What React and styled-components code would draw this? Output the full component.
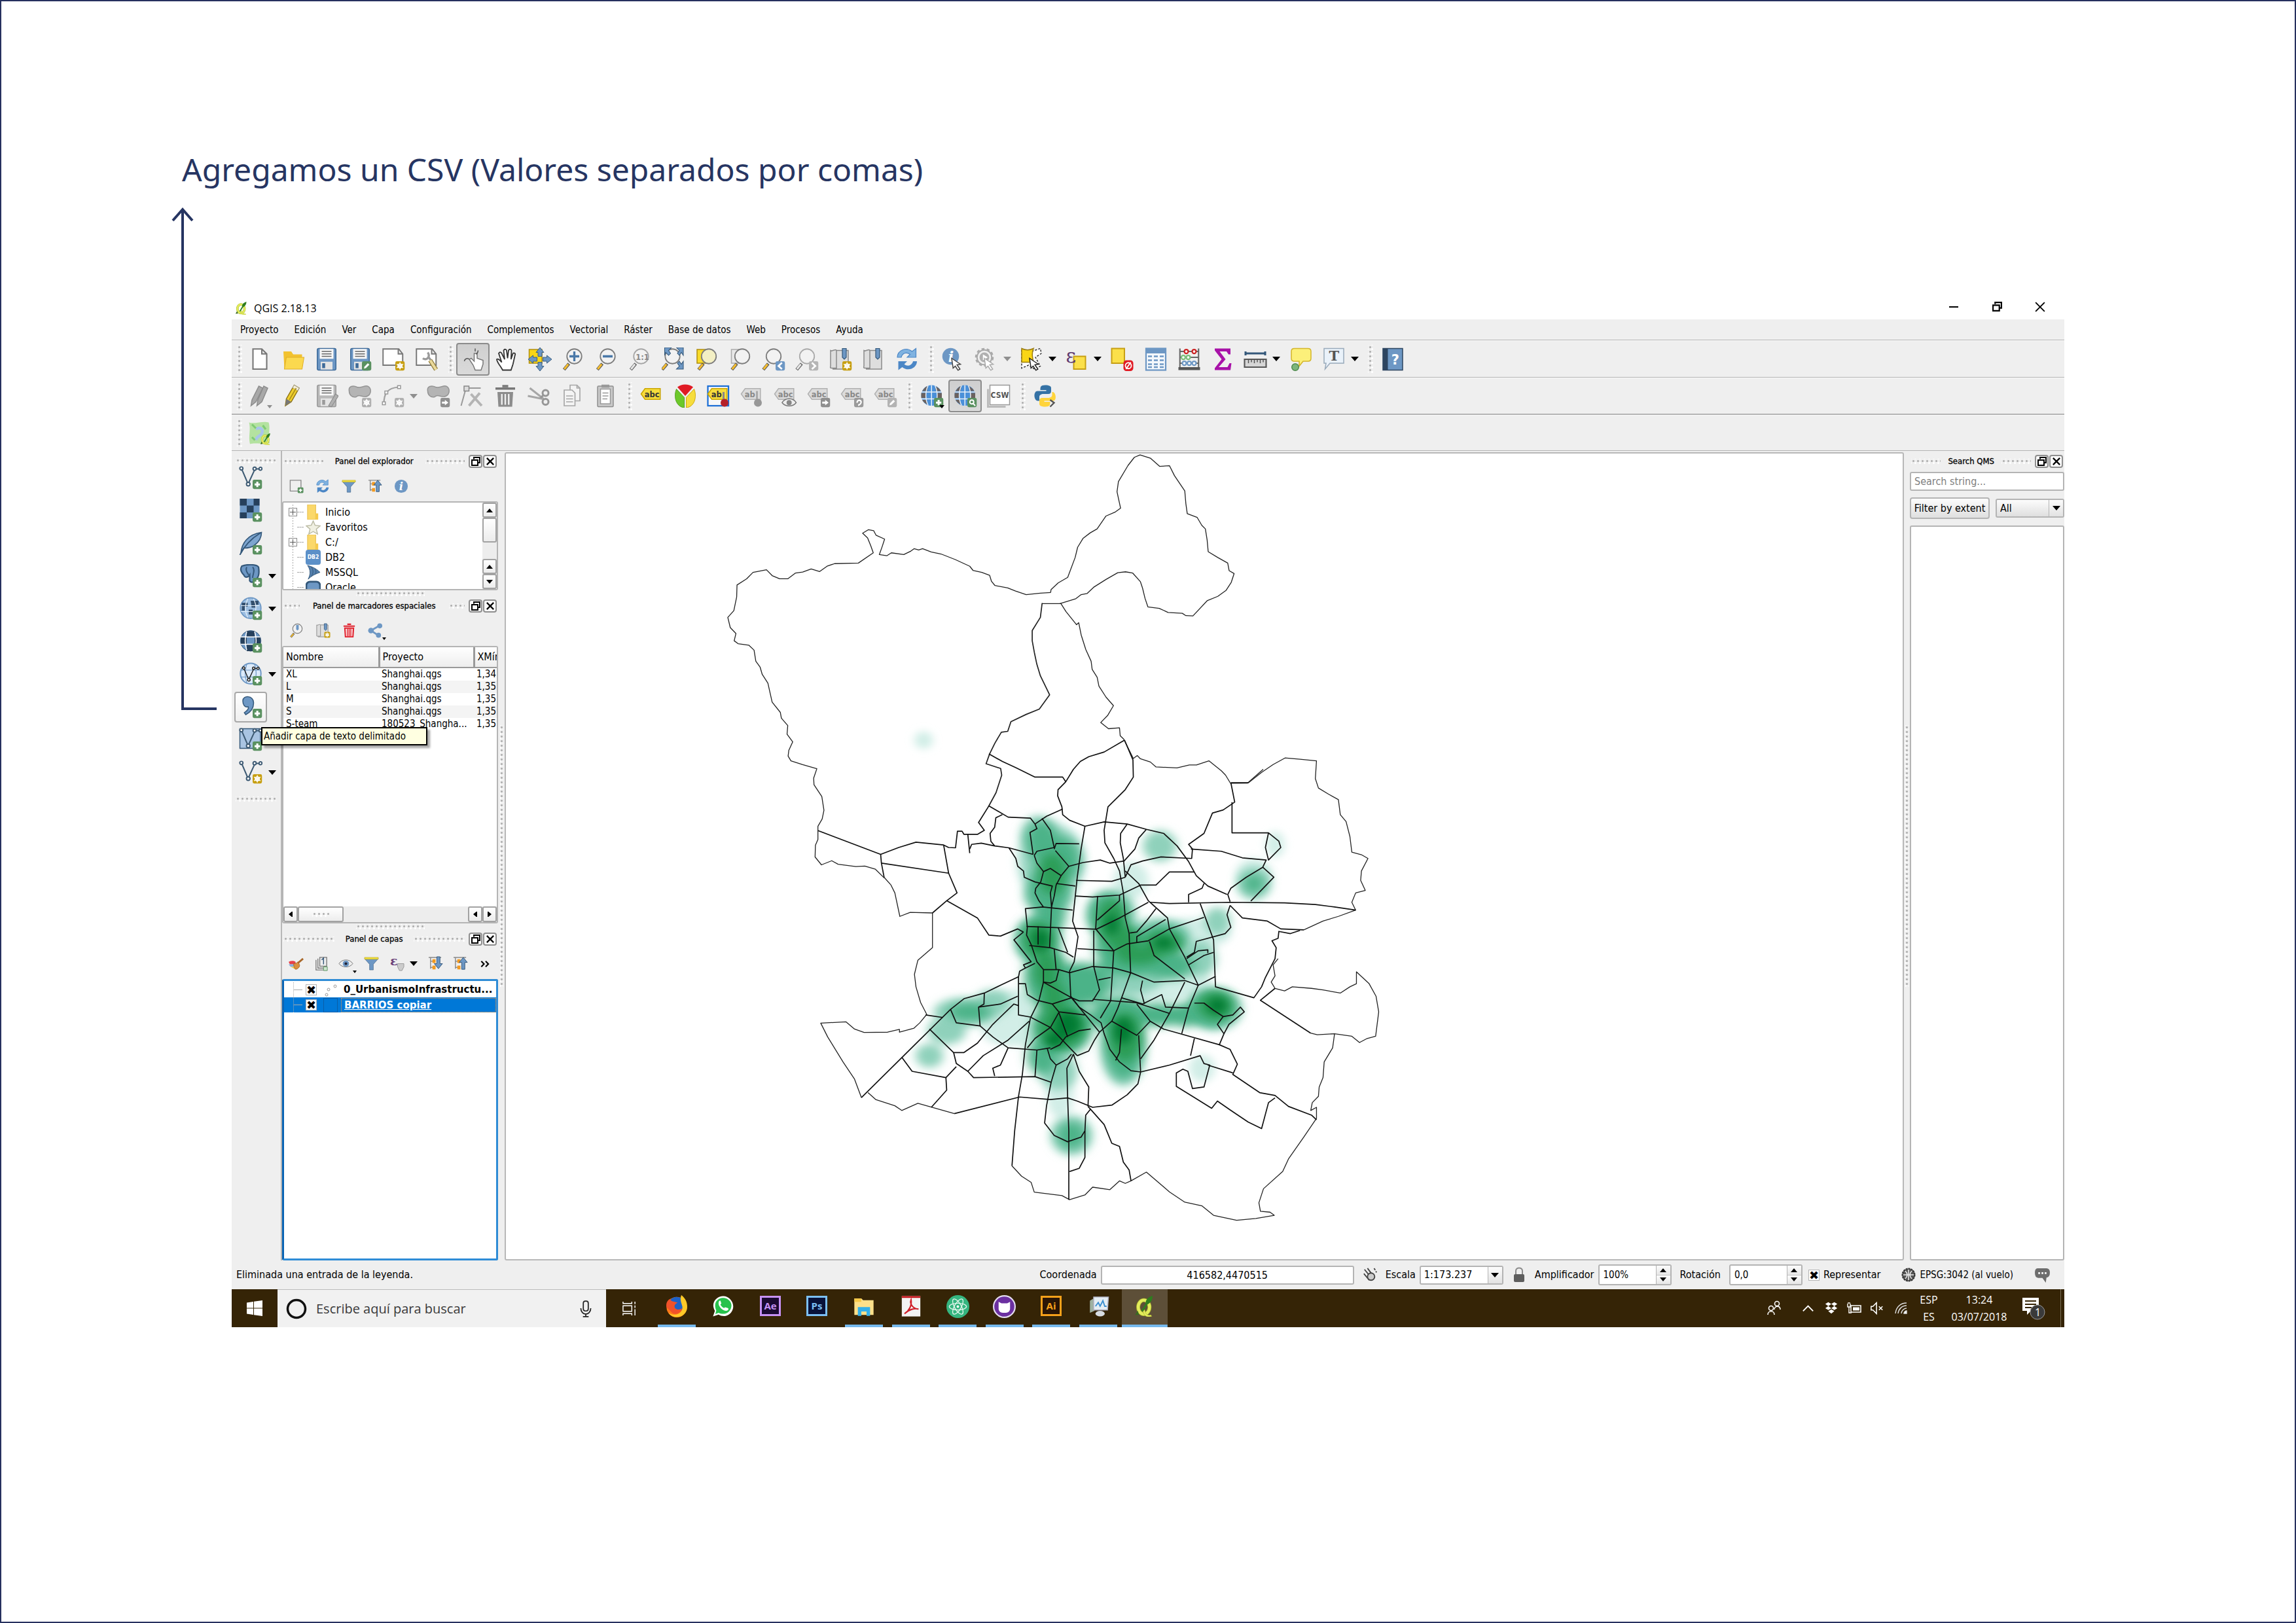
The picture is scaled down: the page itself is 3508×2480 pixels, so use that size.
import React from 'react';
import styled, { createGlobalStyle, css } from 'styled-components';

const UI = '"DejaVu Sans Condensed", "DejaVu Sans", sans-serif';
const SYSTEM = '"Open Sans", "Noto Sans", sans-serif';

const Global = createGlobalStyle`
  *, *::before, *::after { box-sizing: border-box; }
  body { margin: 0; background: #fff; color: #000; font: 16px/20px ${UI}; }
  button, input, select { font: inherit; color: inherit; margin: 0; }
  svg { display: block; }
`;

/* ---------- page ---------- */
const Page = styled.main`
  min-height: 100vh;
  display: flex;
  flex-direction: column;
  padding: 225px 352px 450px 260px;
  border: 2px solid #26315f;
`;
const Heading = styled.h1`
  margin: 0 0 0 16px;
  font: 400 48px/64px "Noto Sans", sans-serif;
  color: #263562;
  white-space: nowrap;
`;
const Stage = styled.div`flex: 1; display: flex;`;
const Pointer = styled.svg`flex: none; width: 92px; height: 772px; margin-top: 25px;`;
const Window = styled.section`
  flex: 1;
  min-width: 0;
  margin-top: 162px;
  display: flex;
  flex-direction: column;
  background: #efefef;
`;

/* ---------- window chrome ---------- */
const TitleBar = styled.header`
  height: 35px;
  display: flex;
  align-items: center;
  gap: 9px;
  padding: 0 4px 0 5px;
  background: #fff;
  font: 16px/20px ${SYSTEM};
`;
const Spacer = styled.div`flex: 1;`;
const WinButtons = styled.div`display: flex;`;
const WinButton = styled.button`
  width: 66px; height: 35px; padding: 0 0 4px;
  display: grid; place-items: center;
  border: 0; background: none;
`;
const MenuBar = styled.nav`
  height: 32px;
  display: flex;
  align-items: center;
  gap: 24px;
  padding-left: 13px;
  border-bottom: 1px solid #b4b4b4;
  font-size: 15px;
`;
const MenuLink = styled.a`color: #000; text-decoration: none;`;
const ToolBar = styled.div`
  height: ${p => p.$h}px;
  display: flex;
  align-items: center;
  border-top: 1px solid #fafafa;
  border-bottom: ${p => p.$line || 1}px solid #b4b4b4;
`;
const dots = css`
  background-image: radial-gradient(circle, #b0b0b0 1px, transparent 2px), radial-gradient(circle, #fff 1px, transparent 2px);
  background-size: 7px 7px;
  background-position: 0 0, 3px 3px;
`;
const Grip = styled.span`
  flex: none;
  align-self: center;
  width: 9px; height: 43px;
  margin: 0 3px 0 8px;
  &:first-child { margin: 0 0 0 8px; }
  ${dots}
`;
const HGrip = styled.span`
  ${p => (p.$w ? `flex: none; width: ${p.$w}px;` : 'flex: 1;')}
  height: 9px;
  ${dots}
`;
const Tool = styled.button`
  position: relative;
  flex: none;
  width: ${p => (p.$drop ? 69 : 51)}px;
  height: 50px;
  padding: 0 0 0 ${p => (p.$drop ? 5 : 0)}px;
  display: flex;
  align-items: center;
  justify-content: ${p => (p.$drop ? 'flex-start' : 'center')};
  gap: 8px;
  border: 2px solid transparent;
  border-radius: 4px;
  background: none;
  ${p => p.$on && 'border-color: #8c8c8c; background: linear-gradient(#cfcfcf, #dadada);'}
`;
const Caret = styled.span`
  flex: none;
  border: ${p => p.$s || 6}px solid transparent;
  border-bottom-width: 0;
  border-top: ${p => (p.$s || 6) + 1}px solid ${p => p.$c || '#000'};
`;
const CornerCaret = styled(Caret)`position: absolute; right: ${p => p.$r || 4}px; bottom: 4px;`;

/* ---------- body ---------- */
const Body = styled.div`flex: 1; display: flex; min-height: 0;`;
const SideBar = styled.div`
  width: 75px;
  padding: 11px 4px 0;
  display: flex;
  flex-direction: column;
`;
const SideGrip = styled.span`height: 9px; width: 62px; margin: ${p => p.$m}; ${dots}`;
const SideItem = styled.div`position: relative; height: 50px; display: flex; align-items: center; gap: 2px;`;
const SideButton = styled.button`
  width: 50px; height: 47px; padding: 0;
  display: grid; place-items: center;
  border: 2px solid transparent; border-radius: 4px; background: none;
  ${p => p.$hover && 'border-color: #a8a8a8; background: linear-gradient(#fff, #efefef);'}
`;
const Tip = styled.div`
  position: absolute;
  z-index: 5;
  left: 41px; top: 56px;
  width: 254px; height: 28px;
  padding: 2px 2px;
  border: 2px solid #000;
  background: #ffffe1;
  box-shadow: 4px 4px 3px rgba(0,0,0,.35);
  white-space: nowrap;
  font-size: 15px;
`;
const Dock = styled.aside`
  flex: none;
  width: ${p => p.$w}px;
  padding-top: 2px;
  display: flex;
  flex-direction: column;
  ${p => p.$line && 'border-left: 2px solid #b8b8b8;'}
`;
const DockTitle = styled.div`
  height: 28px;
  display: flex;
  align-items: center;
  padding: 0 2px;
`;
const DockName = styled.h2`
  margin: 0 ${p => p.$m || 16}px;
  font: 400 13px/20px ${UI};
  -webkit-text-stroke: 0.3px #000;
  white-space: nowrap;
`;
const DockButton = styled.button`
  width: 21px; height: 20px; padding: 0; margin-left: 1px;
  display: grid; place-items: center;
  border: 2px solid #8e8e8e; border-radius: 4px; background: #fbfbfb;
`;
const DockTools = styled.div`height: 47px; display: flex; align-items: center; padding-left: 2px;`;
const DockTool = styled.button`
  position: relative;
  width: ${p => p.$w || 40}px; height: 36px; padding: 0;
  display: flex; align-items: center; justify-content: center; gap: 8px;
  border: 0; background: none;
`;
const Splitter = styled.div`height: 10px; display: flex; align-items: center; justify-content: center;`;
const VSplitter = styled.div`
  flex: none;
  width: ${p => p.$w}px;
  display: flex; justify-content: center; align-items: center;
  & > span { width: 5px; height: 400px; ${dots} background-size: 5px 7px; }
`;
const Box = styled.div`
  border: 2px solid #b4b4b4;
  border-radius: 3px;
  background: #fff;
  overflow: hidden;
  display: flex;
`;
const ResultBox = styled(Box)`flex: 1;`;
const Tree = styled.ul`
  flex: 1; list-style: none;
  margin: 3px 0 0 6px; padding: 0 0 0 2px;
  height: 129px; overflow: hidden;
  background: repeating-linear-gradient(#a8a8a8 0 2px, transparent 2px 4px) 8px 0 / 1px 100% no-repeat;
`;
const TreeRow = styled.li`
  height: 23px;
  display: flex; align-items: center;
`;
const Expander = styled.button`
  width: 13px; height: 13px; padding: 0;
  display: grid; place-items: center;
  border: 1px solid #8a8a8a; background: #fff;
  visibility: ${p => (p.$none ? 'hidden' : 'visible')};
`;
const Stub = styled.span`width: 10px; margin-right: 3px; border-top: 1px dashed #a8a8a8;`;
const TreeText = styled.span`margin-left: 7px;`;
const VScroll = styled.div`width: 22px; display: flex; flex-direction: column; background: #ededed;`;
const HScroll = styled.div`height: 24px; display: flex; background: #ededed;`;
const ScrollKey = styled.button`
  flex: none;
  width: ${p => p.$w || 22}px; height: ${p => p.$h || 23}px; padding: 0;
  display: grid; place-items: center;
  border: 2px solid #a2a2a2; border-radius: 3px;
  background: linear-gradient(#fff, #ececec);
`;
const TableBox = styled(Box)`flex: 1; flex-direction: column; min-height: 0;`;
const TableClip = styled.div`flex: 1; overflow: hidden;`;
const Table = styled.table`
  width: 392px; table-layout: fixed; border-collapse: collapse;
  th, td { padding: 0 0 0 4px; font-weight: 400; text-align: left; white-space: nowrap; }
  th { height: 31px; border-right: 3px solid #9a9a9a; border-bottom: 2px solid #9a9a9a; background: linear-gradient(#fff, #ededed); }
  td { height: 19px; line-height: 19px; font-size: 15px; }
  tbody tr:nth-child(even) { background: #f4f4f4; }
`;
const Layers = styled.ul`
  flex: 1; margin: 0; padding: 2px 0; list-style: none;
  border: 3px solid #2f8cd6; border-left-color: #0a64b4; border-radius: 3px;
  background: #fff;
`;
const Layer = styled.li`
  height: 23px; padding-left: 14px;
  display: flex; align-items: center;
  background: ${p => (p.$on ? '#0078d7' : 'transparent')};
  color: ${p => (p.$on ? '#fff' : '#000')};
`;
const Branch = styled.span`
  width: 14px; height: 100%; margin-right: 5px;
  background: linear-gradient(#aaa, #aaa) 0 50% / 14px 1px no-repeat;
  border-left: 1px dotted #aaa;
`;
const Check = styled.input`
  appearance: none;
  flex: none;
  width: 17px; height: 17px;
  display: grid; place-items: center;
  border: 1px solid #b5b5b5; background: #fff;
  &:checked::before { content: '✖'; color: #000; font: 18px/16px "DejaVu Sans", sans-serif; }
`;
const Swatch = styled.span`width: 22px; height: 22px; margin: 0 5px 0 10px; ${p => p.$on && 'border: 1px solid #0a5ea8;'}`;
const LayerLabel = styled.label`
  flex: 1; padding-left: 4px; height: 22px; line-height: 20px;
  font-family: "DejaVu Sans", sans-serif;
  font-weight: 700; font-size: 15px; white-space: nowrap;
  ${p => p.$on && 'border: 1px dotted #ff9a3c; text-decoration: underline;'}
`;
const MapCanvas = styled.div`
  flex: 1; min-width: 0;
  margin-top: 2px;
  border: 2px solid #b8b8b8; border-radius: 3px;
  background: #fff;
  svg { width: 100%; height: 100%; }
`;
const Field = styled.input`
  width: ${p => (p.$w ? p.$w + 'px' : '100%')};
  height: 29px; padding: 0 5px;
  border: 2px solid #b4b4b4; border-radius: 3px; background: #fff;
  text-align: ${p => p.$align || 'left'};
  &::placeholder { color: #808080; opacity: 1; }
`;
const SearchField = styled(Field)`margin-top: 2px;`;
const FilterRow = styled.div`display: flex; align-items: center; gap: 9px; margin: 10px 0;`;
const PushButton = styled.button`
  width: 122px; height: 33px; padding: 0;
  border: 2px solid #b4b4b4; border-radius: 4px;
  background: linear-gradient(#fcfcfc, #dfdfdf);
  white-space: nowrap;
`;
const Combo = styled.div`
  ${p => (p.$w ? `width: ${p.$w}px;` : 'flex: 1;')}
  height: 29px; display: flex; align-items: stretch;
  border: 2px solid #b4b4b4; border-radius: 3px;
  background: ${p => (p.$w ? '#fff' : 'linear-gradient(#fcfcfc, #dfdfdf)')};
  select { flex: 1; min-width: 0; appearance: none; border: 0; background: none; padding: 0 5px; }
  & > span { width: 22px; display: grid; place-items: center; border-left: 1px solid #b4b4b4; background: linear-gradient(#fcfcfc, #e2e2e2); }
`;

/* ---------- status bar ---------- */
const Status = styled.footer`height: 44px; display: flex; align-items: center; padding: 0 21px 0 7px;`;
const StatusLabel = styled.label`margin-right: ${p => (p.$r === undefined ? 6 : p.$r)}px; white-space: nowrap;`;
const StatusText = styled.span`font-size: ${p => p.$fs || 16}px; white-space: nowrap;`;
const Slot = styled.span`width: ${p => p.$w}px; display: grid; place-items: center;`;
const Spin = styled.div`
  width: 112px; height: 32px; margin-right: ${p => p.$r}px; display: flex;
  border: 2px solid #b4b4b4; border-radius: 3px; background: #fff;
  input { flex: 1; min-width: 0; border: 0; background: none; padding: 0 6px; font-size: 15px; }
  div { width: 22px; display: flex; flex-direction: column; border-left: 1px solid #b4b4b4; }
  button { flex: 1; padding: 0; display: grid; place-items: center; border: 0; background: linear-gradient(#fcfcfc, #e6e6e6); }
  button + button { border-top: 1px solid #c8c8c8; }
`;

/* ---------- task bar ---------- */
const TaskBar = styled.div`height: 58px; display: flex; align-items: stretch; background: #352406; color: #fff; font: 16px/20px ${SYSTEM};`;
const Start = styled.button`width: 70px; padding: 0; border: 0; background: none; display: grid; place-items: center;`;
const Search = styled.label`
  width: 502px; padding: 0 18px 0 13px;
  display: flex; align-items: center; gap: 14px;
  background: #f1f1f1; border-top: 1px solid #bbb;
  input { flex: 1; min-width: 0; border: 0; background: none; padding: 0; font: 20px/28px ${SYSTEM}; color: #333; }
  input::placeholder { color: #3a3a3a; opacity: 1; }
`;
const Tasks = styled.div`flex: none; width: 787px; margin-left: 72px; display: flex;`;
const TaskView = styled.button`width: 70px; margin-right: -70px; padding: 0; border: 0; background: none; display: grid; place-items: center;`;
const Task = styled.button`
  flex: 1; padding: 0 0 3px; margin: 0 1px;
  display: grid; place-items: center;
  border: 0;
  background: ${p => (p.$on ? '#5d4f38' : 'none')};
  border-bottom: 3px solid transparent;
  ${p => p.$run && 'background-image: linear-gradient(#76b9ed, #76b9ed); background-size: ' + (p.$on ? '100%' : '58px') + ' 4px; background-repeat: no-repeat; background-position: 50% 100%; background-origin: border-box; background-clip: border-box;'}
`;
const Tray = styled.div`display: flex; align-items: center;`;
const TrayIcon = styled.button`width: ${p => p.$w || 35}px; padding: 0; border: 0; background: none; display: grid; place-items: center;`;
const TrayText = styled.div`width: ${p => p.$w}px; text-align: center; line-height: 26px; white-space: nowrap;`;
const Peek = styled.span`width: 6px; margin-left: 15px; border-left: 1px solid #7a6d55;`;

/* ---------- icons ---------- */
const B = '#6d97c4';
const N = '#34587a';
const Badge = ({ c = '#5a9160', k = 'plus', x = 14, y = 14 }) => (
  <g transform={`translate(${x} ${y})`}>
    <rect width="9.5" height="9.5" rx="1.6" fill={c} />
    {k === 'plus' && <path d="M4.75 2v5.5M2 4.75h5.5" stroke="#fff" strokeWidth="2" />}
    {k === 'star' && <><circle cx="4.75" cy="4.75" r="2" fill="none" stroke="#fff" strokeWidth="1.2" /><path d="M4.75 1v7.5M1.4 2.9l6.6 3.8M1.4 6.7L8 2.9" stroke="#fff" strokeWidth=".9" /></>}
    {k === 'pen' && <path d="M2 7.5l.6-2L6 2l1.6 1.5L4 7z" fill="#fff" />}
    {k === 'right' && <path d="M1.5 3.8h3V2L8 4.8 4.5 7.5V5.8h-3z" fill="#fff" />}
    {k === 'lt' && <path d="M6.5 1.5L3 4.8 6.5 8" fill="none" stroke="#fff" strokeWidth="1.8" />}
    {k === 'gt' && <path d="M3 1.5l3.500 3.300L3 8" fill="none" stroke="#fff" strokeWidth="1.8" />}
    {k === 'turn' && <path d="M3 5c0-4 5-3 4 0s-3 1-2 3" fill="none" stroke="#fff" strokeWidth="1.5" />}
    {k === 'find' && <><circle cx="4.5" cy="4.2" r="2" fill="none" stroke="#fff" strokeWidth="1.3" /><path d="M6 5.7l2 2.300" stroke="#fff" strokeWidth="1.3" /></>}
  </g>
);
const Lens = ({ fill = '#f2f2f2', handle = '#f5bd2f', x = 0, ring = '#7d7d7d', children }) => (
  <g transform={`translate(${x} 0)`}>
    <path d="M2.500 22.500l5-6" stroke="#555" strokeWidth="3.2" /><path d="M2.800 22l4-5" stroke={handle} strokeWidth="2" />
    <circle cx="13" cy="9" r="7.5" fill={fill} stroke={ring} strokeWidth="1.2" />
    {children}
  </g>
);
const Cursor = ({ x = 10, y = 11, c = '#444' }) => <path transform={`translate(${x} ${y})`} d="M0 0l9 6-3.500.700 3 4.300-2 1.200-2.800-4.200L1.500 10z" fill="#fff" stroke={c} strokeWidth="1" />;
const Floppy = ({ c = B, e = '#3d6a99' }) => (
  <g><rect x="2.5" y="1" width="19" height="22" rx="1.5" fill={c} stroke={e} />
    <rect x="5" y="1.5" width="14" height="10" fill="#f7f7f7" /><path d="M7 4h10M7 6.500h10M7 9h10" stroke="#666" />
    <rect x="6" y="14.5" width="12" height="8" fill="#e4e4e4" /><rect x="7.5" y="16" width="3" height="5" fill={e} /></g>
);
const Globe = ({ c = '#4a90d9' }) => (
  <g><circle cx="11.5" cy="11.5" r="10.5" fill={c} />
    <path d="M2 7c2-3 4-5 6-5l-1 5zM1 9h5v5H1zM2 16h4l2 5c-3-1-5-3-6-5zM15 2c3 1 5 3 6 5h-5zM17 9h5v5h-5zM16 16h5c-1 3-3 4-6 5z" fill="#6b625f" />
    <path d="M1.500 8h20M1.500 15h20M8 1.500c-3 6-3 14 0 20M15 1.500c3 6 3 14 0 20M11.500 1v21" stroke="#e8f0f8" strokeWidth="1" fill="none" /></g>
);
const Vee = ({ c = '#3d5a73' }) => (
  <g fill="none" stroke={c} strokeWidth="1.3"><path d="M3 3.500L9 17.500M10 17L16 4M17 3h4.500" /><g fill="#fff"><circle cx="2.5" cy="2.5" r="1.6" /><circle cx="9.5" cy="18.5" r="1.8" /><circle cx="16" cy="2.8" r="1.6" /><circle cx="22" cy="2.8" r="1.5" /></g></g>
);
const Tag = ({ on, t = 'abc' }) => (
  <g><path d="M1 10l4-5.500h15.500v11H5z" fill={on ? '#f6dd3c' : '#dcdcdc'} stroke={on ? '#c9a400' : '#b0b0b0'} />
    <text x="4.5" y="13.2" fontSize="8.5" fontWeight="700" fontFamily="DejaVu Sans Condensed" fill={on ? '#333' : '#888'}>{t}</text></g>
);
const Blob = () => <path d="M1 7c-1-5 4-6 8-4 3 1 5 0 8-1 5-1 7 4 5 8-2 3-6 3-9 2s-4 0-5 1c-4 1-7-2-7-6z" fill="#b4b4b4" stroke="#949494" />;
const Dots = ({ down }) => (
  <g><path d="M1 2h20M4 2v18M4 8h4M4 18h4" stroke="#8a8a8a" fill="none" strokeWidth="1.5" /><path d="M7 5h5v6H7zM7 15h5v6H7z" fill="#f39a1f" />
    <path d={down ? 'M14 1h5v11h4l-6.500 8L10 12h4z' : 'M14 21h5V10h4l-6.500-8L10 10h4z'} fill={B} stroke={N} /></g>
);
const Refresh = ({ a = '#4c87c6', b = '#7fb2e0' }) => (
  <g><path d="M2 10C2 3 11-1 17 4l4-3v9h-9l3-3c-4-3-8-1-9 3z" fill={b} stroke={a} strokeWidth=".8" /><path d="M22 14c0 7-9 11-15 6l-4 3v-9h9l-3 3c4 3 8 1 9-3z" fill={a} /></g>
);
const QLogo = () => (
  <g><ellipse cx="11" cy="13" rx="6.5" ry="8" fill="none" stroke="#aab52e" strokeWidth="4.4" /><ellipse cx="11" cy="13" rx="6.5" ry="8" fill="none" stroke="#e3ec5c" strokeWidth="3.2" />
    <path d="M12 16c1 5 3 7 7 6l1 1.500c-5 2-9 0-10-6z" fill="#e3ec5c" stroke="#aab52e" strokeWidth=".5" />
    <path d="M21 0c-6 2-8 5-8 9l-5 8 2 1 5-8c4-2 6-5 6-10z" fill="#2f7d1f" /><path d="M1 22l3-5 1.500 5z" fill="#3a6a22" /></g>
);
const Book = () => <><path d="M3 3.500c4-1.500 5-1.500 5 0V21H3c-2 0-1-2-1-2V3zM8 3h12v19H4" fill="#dedede" stroke="#8a8a8a" /><path d="M14 1h4v9l-2 2-2-2z" fill={B} stroke={N} strokeWidth=".8" /></>;
const Eye = ({ c = '#777' }) => <><path d="M1 12c5-8 17-8 22 0-5 7-17 7-22 0z" fill="#eee" stroke={c} /><circle cx="12" cy="12" r="5" fill={B} /><circle cx="12" cy="12" r="2.2" fill="#223" /></>;
const Funnel = () => <><path d="M1 4h22l-8 9v9h-6v-9z" fill={B} stroke={N} strokeWidth=".6" /><path d="M1 2h22v3H1z" fill="#f2e03a" stroke="#b8a32a" strokeWidth=".6" /></>;

const ICONS = {
  page: <path d="M5 1.500h9l5 5V22H5zM14 1.500v5h5" fill="#fff" stroke="#777" strokeWidth="1.4" />,
  open: <><path d="M2 4h8l2 3h9v15H3z" fill="#f2c230" /><path d="M5 10h18l-2 12H3z" fill="#fbd94f" stroke="#e0b02a" strokeWidth=".7" /></>,
  save: <Floppy />,
  saveAs: <><Floppy /><Badge k="pen" /></>,
  composer: <><path d="M1.500 1.500h16l4 5V18h-20zM17 1.500v5h4.500" fill="#fff" stroke="#777" strokeWidth="1.3" /><Badge c="#c79f12" k="star" /></>,
  manager: <><path d="M1.500 1.500h16l4 5V18h-20zM17 1.500v5h4.500" fill="#fff" stroke="#777" strokeWidth="1.3" /><path d="M8 11c4 3 8-2 5-6M14 10l3 4" fill="none" stroke="#9a9a9a" strokeWidth="2.2" /><path d="M15.500 13l6 9.500" stroke="#8e7a3a" strokeWidth="4.4" /><path d="M15.500 13l6 9.500" stroke="#ead99a" strokeWidth="2.8" /></>,
  touch: <><path d="M13 6v8l-3-3-2 1 4 6 2 5h6l2-6v-4l-6-2V6z" fill="#fff" stroke="#777" /><path d="M14 1v3M8 12c-2-2-5 0-5 2M17 3c0 2-1 3-2 4" stroke="#555" fill="none" /></>,
  hand: <path d="M8 23c-2-4-6-8-6-11 2-1 3 1 5 3L4 6c1-2 3-1 3 0l3 6-1-9c1-2 3-1 3 0l1 8 1-8c1-2 3-1 3 0l-.500 9 2-6c1-1 3 0 2 2l-2 9-2 6z" fill="#fff" stroke="#333" strokeWidth="1.2" />,
  panSel: <><path d="M1 2h13v14H1z" fill="#f9d616" stroke="#b08e10" /><path d="M12 0l4 5h-2v4h-4V5H8zM12 24l4-5h-2v-4h-4v4H8zM0 12l5-4v2h4v4H5v2zM24 12l-5-4v2h-4v4h4v2z" fill={B} stroke={N} strokeWidth=".6" /></>,
  zoomIn: <Lens><path d="M13 4v10M8 9h10" stroke="#4a78a8" strokeWidth="2.2" /></Lens>,
  zoomOut: <Lens><path d="M8 9h10" stroke="#4a78a8" strokeWidth="2.4" /></Lens>,
  zoom11: <Lens handle="#e6e6e6" ring="#a5a5a5"><text x="7.5" y="12.5" fontSize="8.5" fontWeight="700" fontFamily="DejaVu Sans Condensed" fill="#888">1:1</text></Lens>,
  zoomFull: <><Lens x={-2} /><path d="M3 0h7L7 3l2 3-2 2-3-3-1 3zM22 0h-7l3 3-2 3 2 2 2-3 2 3zM22 22h-7l3-3-2-3 2-2 2 3 2-3z" fill={B} stroke={N} strokeWidth=".7" /></>,
  zoomSel: <><path d="M2 2h11v14H2z" fill="#f9dc2a" stroke="#b08e10" /><Lens fill="#f3efc4" x={1} /></>,
  zoomLayer: <><path d="M3 2h11v14H3z" fill="#e8e8e8" stroke="#aaa" /><Lens x={1} /></>,
  zoomLast: <><Lens x={-1} /><Badge c={B} k="lt" /></>,
  zoomNext: <><Lens x={-1} handle="#e6e6e6" ring="#aaa" /><Badge c="#b5b5b5" k="gt" /></>,
  bookNew: <><Book /><Badge c="#c79f12" k="star" /></>,
  book: <Book />,
  refresh: <Refresh />,
  identify: <><circle cx="9" cy="9" r="8.5" fill={B} /><text x="6.5" y="14.5" fontSize="15" fontStyle="italic" fontWeight="700" fontFamily="DejaVu Serif" fill="#fff">i</text><Cursor /></>,
  action: <><circle cx="10" cy="10" r="7.5" fill="#efefef" stroke="#a9a9a9" strokeWidth="1.3" /><circle cx="10" cy="10" r="8.7" fill="none" stroke="#a9a9a9" strokeWidth="1.6" strokeDasharray="3 2.400" /><circle cx="10" cy="10" r="5" fill="#b0b0b0" /><path d="M8.500 7l5 3-5 3z" fill="#fff" /><Cursor c="#aaa" /></>,
  select: <><path d="M2 2l10 2 9-3 1 5-6 4 5 9-6 3-6-4-7 3V15z" fill="#fff" stroke="#333" strokeDasharray="2 1.500" /><path d="M2 1c4 2 8 2 12 0-2 5-1 9 0 14H2z" fill="#f9d616" stroke="#9c7d10" /><Cursor c="#222" /></>,
  express: <><path d="M9 9h12v13H9z" fill="#fbe04a" stroke="#c79f12" strokeWidth="1.3" /><text x="1" y="15" fontSize="20" fontFamily="DejaVu Serif" fill="#5e3a6e">ε</text></>,
  deselect: <><path d="M1 1h13v15H1z" fill="#fbe04a" stroke="#c79f12" strokeWidth="1.3" /><rect x="13" y="13" width="10" height="11" rx="3" fill="#e01b24" /><circle cx="18" cy="18.5" r="3" fill="none" stroke="#fff" strokeWidth="1.2" /><path d="M15.500 22l5-7" stroke="#fff" strokeWidth="1.2" /></>,
  attrs: <><rect x="2" y="1" width="20" height="22" fill="#f4f8fc" stroke={B} strokeWidth="1.5" /><path d="M2 1h20v5H2z" fill={B} /><path d="M4 9h4M10 9h4M16 9h4M4 13h4M10 13h4M16 13h4M4 17h4M10 17h4M16 17h4M4 20h4M10 20h4M16 20h4" stroke={B} strokeWidth="1.6" /></>,
  abacus: <><path d="M2.500 1v20M21.500 1v20M3 4h18M3 10h18M3 16h18" stroke="#666" strokeWidth="1.4" /><path d="M1 20h22v3H1z" fill="#555" /><g fill="#fff" strokeWidth="1.5"><g stroke="#c22"><circle cx="9" cy="4" r="2" /><circle cx="17" cy="4" r="2" /></g><g stroke="#7abf7a"><circle cx="6" cy="10" r="2" /><circle cx="11" cy="10" r="2" /></g><g stroke={B}><circle cx="7" cy="16" r="2" /><circle cx="12" cy="16" r="2" /><circle cx="17" cy="16" r="2" /></g></g></>,
  sigma: <path d="M4 1h16v6h-2l-2-3H9l6 8-7 8h9l2-4h2l-1 7H4v-2l7-9-7-9z" fill="#a812a8" />,
  measure: <><path d="M2 6h20M2 4v4M22 4v4" stroke={N} strokeWidth="2" /><path d="M1 12h22v8H1z" fill="#d6d6d6" stroke="#555" strokeWidth="1.4" /><path d="M5 12v4M8 12v3M11 12v4M14 12v3M17 12v4M20 12v3" stroke="#555" /></>,
  tip: <><path d="M5 1h14q3 0 3 3v7q0 3-3 3h-5l-4 5v-5H5q-3 0-3-3V4q0-3 3-3z" fill="#fcf07a" stroke="#d3b52a" /><circle cx="6" cy="20" r="3.5" fill="#7db57a" stroke="#4e8a4e" /></>,
  textNote: <><path d="M2 1h20v15H8l-5 6 1-6H2z" fill="#eaf2fa" stroke="#9ab" /><text x="7" y="13.5" fontSize="14" fontWeight="700" fontFamily="DejaVu Serif" fill="#555">T</text></>,
  help: <><path d="M2 1h20v22H2z" fill={B} stroke="#2d4560" /><path d="M2 1h5v22H2z" fill="#2d4560" /><text x="10.5" y="17" fontSize="14" fontWeight="700" fontFamily="DejaVu Sans" fill="#fff">?</text></>,
  pencils: <g stroke="#8c8c8c" fill="#a8a8a8"><path d="M3 22l1-6L11 2l4 2L8 18z" /><path d="M9 22l1-6L16 2l4 2-6 14z" /></g>,
  pencil: <><path d="M4 22l1-7L13 1l5 3-8 14z" fill="#f0cf2e" stroke="#8e7414" /><path d="M13 1l5 3-1.500 2.500-5-3z" fill="#f6f0d8" stroke="#aaa" strokeWidth=".6" /><path d="M4 22l1-7 5 3z" fill="#777" /><path d="M8 16l7-12" stroke="#a98e1a" /></>,
  saveG: <><Floppy c="#b9b9b9" e="#9a9a9a" /><path d="M14 22l7-12 3 2-7 11z" fill="#b0b0b0" stroke="#8a8a8a" strokeWidth=".7" /></>,
  blobStar: <><Blob /><Badge c="#b0b0b0" k="star" /></>,
  nodeStar: <><path d="M3 20C3 10 6 4 18 3" fill="none" stroke="#a0a0a0" strokeWidth="1.5" /><g fill="#fff" stroke="#999"><path d="M1.500 18h3v3h-3zM4 7h3v3H4zM17 1.500h3v3h-3z" /></g><Badge c="#b0b0b0" k="star" /></>,
  blobMove: <><Blob /><Badge c="#8f8f8f" k="right" /></>,
  nodeTool: <><path d="M1 22L6 4h15" fill="none" stroke="#999" strokeWidth="1.3" /><rect x="4" y="2" width="5" height="5" fill="#ddd" stroke="#888" /><path d="M9 22L20 9M11 10l11 12" stroke="#b4b4b4" strokeWidth="2.6" /></>,
  trash: <><path d="M2 4.500h20M9 2h6" stroke="#777" strokeWidth="2.2" /><path d="M4 8h16l-1 15H5z" fill="#8c8c8c" /><path d="M8.500 10v11M12 10v11M15.500 10v11" stroke="#f0f0f0" strokeWidth="1.6" /></>,
  cut: <><path d="M1 12l15 3M3 4l14 11" stroke="#a6a6a6" strokeWidth="2" /><g fill="none" stroke="#969696" strokeWidth="2"><circle cx="19" cy="9" r="3" /><circle cx="19" cy="18" r="3" /></g><path d="M14 14l3-3" stroke="#969696" strokeWidth="2" /></>,
  copy: <g fill="#f4f4f4" stroke="#a6a6a6" strokeWidth="1.1"><path d="M10 1h7l3 3v13H10zM17 1v3h3" /><path d="M4 6h8l3 3v13H4z" /><path d="M6 12h7M6 15h7M6 18h7" /></g>,
  paste: <><rect x="4" y="2" width="16" height="21" rx="1" fill="#c9c9c9" stroke="#8f8f8f" /><rect x="8" y="0.5" width="8" height="3" fill="#999" /><path d="M7 5h10v15H7z" fill="#fff" stroke="#999" /><path d="M9 9h6M9 12h6M9 15h5" stroke="#999" /></>,
  abc: <Tag on />,
  pie: <><path d="M12 12L4 3c5-4 12-3 16 0z" fill="#e01b24" /><path d="M11 13.500V24C2 23 0 12 3 5z" fill="#6cc82a" stroke="#4c9a18" strokeWidth=".6" /><path d="M13 13.500V24c9-1 11-12 8-19z" fill="#f6dd3c" stroke="#c9a400" strokeWidth=".6" /></>,
  abPin: <><rect x="1" y="2" width="21" height="20" fill="#f7f7f7" stroke="#1c6fd6" strokeWidth="1.5" /><Tag on t="ab" /><path d="M17 8v9" stroke="#888" strokeWidth="2" /><circle cx="18" cy="19" r="4" fill="#b5202a" /></>,
  abPinG: <><Tag t="ab" /><path d="M17 7v9" stroke="#aaa" strokeWidth="2" /><circle cx="18" cy="19" r="4" fill="#979797" /></>,
  abcEye: <><Tag /><g transform="translate(8 11) scale(.65)"><path d="M1 12c5-8 17-8 22 0-5 7-17 7-22 0z" fill="#eee" stroke="#777" strokeWidth="1.5" /><circle cx="12" cy="12" r="4" fill="#888" /></g></>,
  abcMove: <><Tag /><Badge c="#8f8f8f" k="right" /></>,
  abcTurn: <><Tag /><Badge c="#9a9a9a" k="turn" /></>,
  abcPen: <><Tag /><Badge c="#b3b3b3" k="pen" /></>,
  globeAdd: <><Globe /><Badge /></>,
  globeFind: <><Globe /><Badge k="find" /></>,
  csw: <><path d="M1 5v18h18" fill="none" stroke="#bbb" strokeWidth="2" /><rect x="3" y="1" width="20" height="20" fill="#fff" stroke="#999" /><text x="13" y="14" textAnchor="middle" fontSize="8" fontWeight="700" fontFamily="DejaVu Sans Condensed" fill="#555">CSW</text></>,
  python: <><path d="M12 1c-5 0-5 2-5 5h6v1H4c-4 0-4 9 0 10h2v-4c0-2 2-3 4-3h5c2 0 3-1 3-3V4c0-2-2-3-6-3z" fill="#3572a5" /><path d="M12 23c5 0 5-2 5-5h-6v-1h9c4 0 3-8 0-9h-1v3c0 2-2 3-4 3H9c-2 0-3 1-3 3v3c0 2 2 3 6 3z" fill="#ffd43b" /><path d="M17 16l4 3-4 4" fill="none" stroke="#555" strokeWidth="1.6" /></>,
  qms: <><path d="M1 1c5 2 15-2 20 0 2 6-1 14 1 21-6 2-14-1-20 1C0 15 3 9 1 1z" fill="#b4e2a0" /><path d="M8 8c4-3 8 0 6 4s-5 2-6 7" fill="none" stroke="#a8c4ea" strokeWidth="3" /><path d="M4 3l4 4M15 4l3 4M4 16l3 3" stroke="#7fcb74" strokeWidth="2" /><g transform="translate(12 12) scale(.5)"><QLogo /></g></>,
  vector: <><Vee /><Badge /></>,
  raster: <><path d="M1 0h20v20H1z" fill={B} /><path d="M1 0h7v7H1zM15 0h6v7h-6zM8 7h7v7H8zM1 14h7v6H1z" fill="#26405c" /><Badge /></>,
  feather: <><path d="M2 22C3 12 9 3 23 1c0 6-3 10-7 13-4 3-8 3-11 3z" fill="#7da5cf" stroke={N} strokeWidth="1.1" /><path d="M1 24C6 14 13 7 22 1.500" stroke={N} strokeWidth="1.3" fill="none" /><Badge /></>,
  elephant: <><path d="M3 2c5-2 15-2 17 1 1 6 0 10-2 12h-2c0 4-4 4-5 2v-6c-2 3-5 3-6 0C2 8 1 5 3 2z" fill={B} stroke={N} strokeWidth="1.5" /><path d="M8 3c-2 4 1 6 2 8M14 3c3 3 0 7 0 11" fill="none" stroke={N} strokeWidth="1.3" /><Badge /></>,
  wms: <><circle cx="12" cy="11.5" r="10.5" fill="#9dbfe2" stroke={B} strokeWidth="1.2" /><path d="M3 6h6v4H6v4H3zM12 4h8v4h-3v3h-4zM10 13h4v5h-4z" fill="#34506e" /><path d="M2 9h19M2 15h19M9 2c-3 6-3 13 0 19M15 2c3 6 3 13 0 19" stroke="#e6f0fa" fill="none" strokeWidth=".8" /><Badge /></>,
  wcs: <><circle cx="12" cy="11.5" r="10.5" fill={B} stroke={N} strokeWidth=".6" /><path d="M2 8h6v7H2zM16 8h6v7h-6zM8 1.500h8v6H8zM8 15h8v7H8z" fill="#26405c" /><path d="M2 7.500h20M2 15h20M8 2c-2 6-2 13 0 19M16 2c2 6 2 13 0 19" stroke="#fff" fill="none" /><Badge /></>,
  wfs: <><circle cx="12" cy="11.5" r="10.5" fill="#dceafa" stroke={B} strokeWidth="1.3" /><path d="M2 8h20M2 15h20M8 2c-2 6-2 13 0 19M16 2c2 6 2 13 0 19" stroke={B} fill="none" strokeWidth=".8" /><g transform="translate(3 4) scale(.75)"><Vee c="#222" /></g><Badge /></>,
  comma: <><path d="M4 6c0-6 11-6 11 2 0 6-4 10-8 12l-1.500-2c3-2 5-4 4-6C6 13 4 10 4 6z" fill={B} stroke={N} /><Badge /></>,
  virtual: <><path d="M1 1h21v20H1z" fill="#a9c4e2" stroke={N} /><Vee /><Badge /></>,
  vectorNew: <><Vee /><Badge c="#c79f12" k="star" /></>,
  addSel: <><path d="M1.500 2h18v18h-18z" fill="none" stroke="#888" strokeWidth="1.5" /><Badge /></>,
  funnel: <Funnel />,
  collapse: <Dots />,
  expand: <Dots down />,
  info: <><circle cx="12" cy="12" r="11" fill={B} /><text x="8.5" y="18.5" fontSize="18" fontStyle="italic" fontWeight="700" fontFamily="DejaVu Serif" fill="#fff">i</text></>,
  zoomBook: <Lens><path d="M11 3h4v7l-2 2-2-2z" fill={B} /></Lens>,
  trashRed: <g stroke="#e0202c"><path d="M3 5h18M9 2h6" strokeWidth="2.2" /><path d="M5 8h14l-1 14H6z" fill="#fbd0d2" strokeWidth="2" /><path d="M9.500 9v12M12 9v12M14.500 9v12" strokeWidth="1.3" /></g>,
  share: <g fill={B}><path d="M5 12L19 4M5 12l12 8" stroke={B} strokeWidth="3" /><circle cx="5" cy="12" r="4.5" /><circle cx="19" cy="4.5" r="4" /><circle cx="17" cy="19.5" r="4" /></g>,
  brush: <><path d="M0 9c4-2 8-2 11 0v4H2z" fill="#e8414a" /><path d="M0 13h11v4H3z" fill="#86aedb" /><path d="M3 17h9l-1 4z" fill="#f6c63a" /><path d="M8 12c3 0 5-1 7-3l2 4c2 3-2 8-6 8-2-2-3-5-3-9z" fill="#d98f3e" stroke="#a9682a" /><path d="M15 11l8-7" stroke="#a9682a" strokeWidth="3" /></>,
  group: <><path d="M4 6v16h16M7 4v15h13M10 2h11v14H10z" fill="none" stroke="#777" strokeWidth="1.4" /><path d="M13 6l3-3v10" fill="none" stroke={N} strokeWidth="1.5" /><path d="M16 17h6v6h-6z" fill="#cfe6cf" stroke="#5a9160" /></>,
  eye: <Eye />,
  eps: <><text x="1" y="15" fontSize="20" fontWeight="700" fontFamily="DejaVu Serif" fill="#6a3f78">ε</text><path d="M13 12h10v5l-3 6h-4l-3-6z" fill="#ccc" stroke="#999" /></>,
  more: <path d="M4 7l5 5-5 5M12 7l5 5-5 5" fill="none" stroke="#000" strokeWidth="2.5" />,
  folder: <><path d="M3 0h13v24H3z" fill="#fbd86a" stroke="#e6bb45" /><path d="M16 14h4v10h-4z" fill="#f6c94a" /></>,
  star: <path d="M12 2l3 7 8 1-6 5 2 8-7-4-7 4 2-8-6-5 8-1z" fill="#f0f0e2" stroke="#b8b8a0" strokeWidth="1.4" />,
  db2: <><rect width="24" height="24" rx="4" fill="#5c90c8" /><text x="12" y="15" textAnchor="middle" fontSize="9" fontWeight="700" fontFamily="DejaVu Sans Condensed" fill="#fff">DB2</text></>,
  mssql: <><path d="M3 1c8 2 15 6 20 11-5 2-12 4-19 11 4-8 4-15-1-22z" fill="#5580ad" stroke={N} /><path d="M9 3c4 6 3 11 0 16M15 6c2 4 2 7 0 9" fill="none" stroke={N} /></>,
  oracle: <rect x="1" y="3" width="22" height="24" rx="6" fill={B} stroke={N} strokeWidth="3" />,
  mouse: <g fill="none" stroke="#444" strokeWidth="2"><path d="M3 3l14 17M8 1l12 16M2 10l9 11" /><circle cx="14" cy="15" r="6" fill="#ccc" /><path d="M19 1l2 3M22 6l1 2" /></g>,
  lock: <><path d="M7 11V6c0-6 10-6 10 0v5" fill="none" stroke="#8a8a8a" strokeWidth="2" /><rect x="4" y="11" width="16" height="12" rx="2" fill="#5e5e5e" /></>,
  crs: <><circle cx="12" cy="12" r="9.5" fill="#555" stroke="#333" strokeWidth="2" strokeDasharray="3 1" /><path d="M12 4v16M4 12h16M7 6c4 4 4 8 0 12M17 6c-4 4-4 8 0 12" stroke="#eee" fill="none" strokeWidth="1.5" /></>,
  bubble: <><path d="M6 2h12q5 0 5 6.500t-5 7l-1 7.500-5-7H6q-5 0-5-7.500T6 2z" fill="#6d6d6d" /><path d="M6 9h2.500M10.800 9h2.500M15.500 9H18" stroke="#fff" strokeWidth="2.5" /></>,
  windows: <path d="M0 3.500L10 2v9.500H0zM11 1.800L24 0v11.500H11zM0 12.500h10V22L0 20.500zM11 12.500h13V24l-13-1.800z" fill="#fff" />,
  mic: <g fill="none" stroke="#222" strokeWidth="1.6"><rect x="8.5" y="1" width="7" height="14" rx="3" /><path d="M5 11c0 11 14 11 14 0M12 19v4M8 23h8" /></g>,
  taskview: <g fill="none" stroke="#fff" strokeWidth="1.5"><path d="M2 1v3h14V1M2 23v-3h14v3M2 7.500h14v9H2zM21 1v4M21 7v4M21 13v10" /></g>,
  firefox: <><circle cx="12" cy="13" r="11" fill="#ff7a18" /><path d="M12 2c-6 0-9 5-9 9 3 9 15 9 17 1l-2-9z" fill="#1e62c8" /><path d="M17 0c5 4 7 9 6 15-2 9-14 12-20 4 9 5 16 0 15-7-1-4-3-7-1-12z" fill="#ffc928" /><path d="M1 13c-1-4 1-8 4-9 0 3 5 3 8 4-3 2-4 3-3 6 3 3 7 1 8 0-2 7-9 8-12 4z" fill="#f0522a" /></>,
  whatsapp: <><path d="M1 23l2-6C-2 8 5 1 12 1s13 8 10 15-10 8-15 5z" fill="#fff" /><path d="M3.500 20.500l1-4C1 8 6 3 12 3s11 6 8 12-9 6-13 4z" fill="#27c24c" /><path d="M8 6c-3 3 1 10 7 11 3 0 3-3 2-3l-3-1-1 1c-2-1-4-3-4-4l1-1-1-3z" fill="#fff" /></>,
  explorer: <><path d="M1 3h8l2 2h12v17H1z" fill="#fde08a" /><path d="M1 3h8v4H1z" fill="#f6c94a" /><path d="M5 23V13h14v10h-4v-5H9v5z" fill="#33b0ea" /></>,
  pdf: <><rect x="2" y="1" width="20" height="22" fill="#f3f3f3" /><path d="M2 1h20v2H2z" fill="#c4161c" /><path d="M5 20c5-3 8-9 7-15-2 5 3 10 8 10-4-1-10 0-15 5z" fill="none" stroke="#d0202a" strokeWidth="1.5" /></>,
  atom: <><circle cx="12" cy="12" r="12" fill="#35b57f" /><g fill="none" stroke="#e4f7ee" strokeWidth=".9"><ellipse cx="12" cy="12" rx="9" ry="3.5" /><ellipse cx="12" cy="12" rx="9" ry="3.5" transform="rotate(60 12 12)" /><ellipse cx="12" cy="12" rx="9" ry="3.5" transform="rotate(120 12 12)" /></g><circle cx="12" cy="12" r="1.3" fill="#fff" /></>,
  github: <><circle cx="12" cy="12" r="12" fill="#e4dcef" /><circle cx="12" cy="12" r="10.5" fill="#6b2fa0" /><path d="M6 7l3 1.500h6L18 7v7c0 3-2 4.500-6 4.500S6 17 6 14z" fill="#fff" /></>,
  monitor: <><path d="M3 6l5-3v14l-5 2z" fill="#9fb0a0" /><path d="M7 2h16l-1 14H7z" fill="#e6eef4" stroke="#aab" /><path d="M9 12l3-4 2 4 3-6 2 6h2" fill="none" stroke="#3b8fd0" strokeWidth="1.3" /><ellipse cx="14" cy="20" rx="5" ry="3" fill="#d8dde2" /></>,
  qgis: <QLogo />,
  person: <g fill="none" stroke="#fff" strokeWidth="1.6"><circle cx="17" cy="5" r="3.5" /><path d="M13 14c0-6 9-7 9 0" /><circle cx="8" cy="12" r="3.5" /><path d="M3 22c0-7 10-7 10 0" /></g>,
  up: <path d="M4 16l8-8 8 8" fill="none" stroke="#fff" strokeWidth="2" />,
  dropbox: <path d="M7 2l5 3-5 3.500L2 5zM17 2l5 3-5 3.500L12 5zM7 8.500l5 3.500-5 3-5-3zM17 8.500l5 3.500-5 3-5-3zM12 14l5 3-5 4-5-4z" fill="#fff" />,
  battery: <><path d="M7 8h15v10H7z" fill="none" stroke="#fff" strokeWidth="1.6" /><path d="M10 10.500h10v5H10z" fill="#fff" /><path d="M2 5v5h4V5M4 10v9h4M3 3v2M5 3v2" stroke="#fff" fill="none" strokeWidth="1.4" /></>,
  mute: <g fill="none" stroke="#fff" strokeWidth="1.7"><path d="M2 9h3l6-6v18l-6-6H2zM15 9l6 6M21 9l-6 6" /></g>,
  wifi: <g fill="none" stroke="#ddd" strokeWidth="1.5"><path d="M3 20C4 10 11 4 20 4M7 20C8 13 13 8 20 8M12 20c0-4 4-8 8-8" /><path d="M16 20c0-2 2-4 4-4v4z" fill="#fff" /></g>,
};
const Icon = ({ n, s = 36 }) => <svg width={s} height={s} viewBox="0 0 24 24" aria-hidden="true">{ICONS[n]}</svg>;

const Adobe = ({ t, c, bg }) => (
  <svg width="32" height="32" viewBox="0 0 32 32" aria-hidden="true">
    <rect x="1.5" y="1.5" width="29" height="28" fill={bg} stroke={c} strokeWidth="3" />
    <text x="16" y="21" textAnchor="middle" fontSize="15" fontWeight="700" fontFamily="Open Sans" fill={c}>{t}</text>
  </svg>
);

/* ---------- data ---------- */
const MENUS = ['Proyecto', 'Edición', 'Ver', 'Capa', 'Configuración', 'Complementos', 'Vectorial', 'Ráster', 'Base de datos', 'Web', 'Procesos', 'Ayuda'];
const FILE_TOOLS = ['|', 'page', 'open', 'save', 'saveAs', 'composer', 'manager', '|', 'touch*', 'hand', 'panSel', 'zoomIn', 'zoomOut', 'zoom11', 'zoomFull', 'zoomSel', 'zoomLayer', 'zoomLast', 'zoomNext', 'bookNew', 'book', 'refresh', '|', 'identify', 'action-', 'select+', 'express+', 'deselect', 'attrs', 'abacus', 'sigma', 'measure+', 'tip', 'textNote+', '|', 'help'];
const EDIT_TOOLS = ['|', 'pencils~', 'pencil', 'saveG', 'blobStar', 'nodeStar-', 'blobMove', 'nodeTool', 'trash', 'cut', 'copy', 'paste', '|', 'abc', 'pie', 'abPin', 'abPinG', 'abcEye', 'abcMove', 'abcTurn', 'abcPen', '|', 'globeAdd_', 'globeFind*', 'csw', '|', 'python'];
const SIDE_TOOLS = ['vector', 'raster', 'feather', 'elephant+', 'wms+', 'wcs', 'wfs+', 'comma', 'virtual', 'vectorNew+'];
const TREE = [['folder', 'Inicio', 1], ['star', 'Favoritos'], ['folder', 'C:/', 1], ['db2', 'DB2'], ['mssql', 'MSSQL'], ['oracle', 'Oracle']];
const MARKS = [['XL', 'Shanghai.qgs', '1,34'], ['L', 'Shanghai.qgs', '1,35'], ['M', 'Shanghai.qgs', '1,35'], ['S', 'Shanghai.qgs', '1,35'], ['S-team', '180523_Shangha...', '1,35']];

const NORTH = [
  'M969 505L940 507 900 512 870 500 848 489 812 481 802 466 797 446 775 436 750 429 741 415 700 392 660 373 632 366 608 355 597 359 584 355 575 363 555 375 520 369 507 379 486 375 494 348 501 322 477 309 470 293 455 290 439 302 453 318 462 345 469 369 427 404 360 406 340 414 318 433 294 424 270 435 250 438 228 458 205 458 184 447 168 427 130 436 112 458 85 479 84 520 76 567 59 590 66 625 82 645 77 670 88 680 118 685 133 702 138 740 150 760 156 785 172 815 184 880 207 915 210 935 228 960 226 990 242 1016 231 1045 229 1065 237 1081 270 1094 310 1108 301 1140 302 1163 324 1203 330 1250 325 1280 313 1305 313 1350 306 1370 305 1410 323 1437 352 1423 370 1435 420 1443 445 1441 475 1452 500 1482',
  'M969 505L970 495 990 472 1017 453 1038 385 1045 350 1060 320 1080 301 1100 287 1125 243 1150 230 1166 216 1156 160 1160 125 1187 70 1205 42 1221 34 1250 45 1276 73 1304 71 1318 105 1347 157 1350 200 1354 235 1382 248 1395 275 1405 287 1410 325 1413 365 1440 385 1468 404 1472 430 1486 440 1478 470 1463 498 1440 518 1410 533 1370 585 1350 584 1340 576 1300 573 1275 559 1243 554 1235 525 1228 490 1222 468 1200 438 1180 434 1158 437 1125 460 1090 487 1072 508 1055 512 1040 526 995 543',
  'M945 543H998L1012 570 1042 615 1048 608 1055 650 1068 700 1083 740 1086 768 1100 795 1105 825 1125 863 1146 892 1130 925 1110 950 1132 971 1163 968 1165 995 1175 1007 1202 1073 1213 1063 1222 1074 1250 1085 1266 1102 1325 1105 1360 1095 1380 1095 1415 1081 1450 1115 1462 1130 1476 1158 1524 1157 1568 1110',
];
const NORTH_BOLD = ['M945 541L940 590 917 635 917 670 923 710 930 750 940 790 966 855 937 904 900 922 857 947 848 980 830 983 812 1020 797 1057 787 1091 828 1107 831 1130 815 1190 794 1237'];
const OUTER = [
  'M257 440L275 465 285 490 298 565 325 552 383 554V665L345 705 336 750 340 790 352 840 368 878 350 905 335 922 297 935V926L266 935 205 936 180 925 158 902 92 906 110 950 150 1030 180 1085 198 1144',
  'M1205 139L1240 105 1270 80 1301 59 1340 63 1383 68 1380 125 1388 155 1415 175 1440 192 1445 240 1460 262 1470 310 1475 360 1500 368 1517 380 1500 420 1498 450 1510 482 1485 490 1475 520 1485 545 1440 565 1400 580 1350 608',
  'M1283 700L1270 720 1275 755 1265 775 1275 795 1300 803 1320 790 1370 795 1400 800 1445 810 1470 790 1487 780V742L1520 780 1538 820 1545 870 1537 948 1515 955 1495 968 1475 948 1430 940 1385 943 1368 938',
  'M1430 940L1425 985 1403 1030 1400 1080 1390 1110 1388 1140 1372 1160 1368 1185 1383 1175V1210L1350 1270 1310 1340 1295 1380 1245 1435 1233 1480 1237 1507 1262 1510 1273 1520 1225 1530 1175 1536 1115 1520 1085 1490 1040 1478 1000 1445 940 1382 900 1410 885 1418 870 1410 845 1438 800 1430 780 1455 740 1470 720 1457 648 1446 640 1415 615 1395 590 1362',
  'M440 1195L345 1162 303 1185 285 1170 235 1150 215 1128',
];
const STREETS = [
  'M1160 138H1205', 'M530 46L565 70 600 90 650 120 722 120 730 135',
  'M883 2L830 40 790 55 768 70 750 95 730 135 710 160 709 180 720 215 722 240 740 258 780 277 830 263 890 270 940 287 985 300 1020 340 1050 390 1070 435 1100 468 1150 495',
  'M883 2L905 65 906 120 885 160 840 215 830 290 832 330 855 380 870 420 880 490 885 570 895 620 899 745 880 810 865 860 850 900 818 935 805 960 790 995 760 1010',
  'M530 212L580 248 638 251 650 270 655 285 637 297 645 367', 'M722 222L680 245 650 270', 'M565 240L548 250 545 280 533 300 535 325 545 340',
  'M668 252L690 290 700 345 655 357 648 370', 'M700 350L705 332 765 333', 'M703 355L738 405 775 393 820 385 845 395 882 388 910 350 920 315 940 287',
  'M890 270L873 300 872 330 880 380 885 440', 'M780 277L770 350 760 440 748 580 762 630 752 710 740 740 743 820 765 855 795 880 822 905 830 940 845 990 870 1030 900 1058 925 1062',
  'M582 346L600 380 605 405 620 420 622 440 650 455 695 468 690 490 693 535 688 665', 'M738 405L718 435 705 465 700 500 693 535', 'M648 370L655 395 672 422 690 412 718 435',
  'M672 422L665 455 652 475 650 490 660 515 672 535', 'M705 460L755 468', 'M757 450L850 453 885 440', 'M755 500L800 503 870 497 925 465H965L1000 423H1065',
  'M885 440L900 400 930 388 978 375 1058 380 1060 350 1050 335 1090 300 1112 235 1140 225 1170 200 1160 138', 'M1163 200V298H1258L1285 325 1290 345 1258 385 1250 345 1258 298',
  'M1056 350L1135 357 1190 378 1252 385 1243 408 1200 440 1160 475 1152 495 1158 518', 'M1243 408L1272 440 1212 516', 'M885 420L920 460 945 515 995 570 1000 605 1040 695 1075 785',
  'M950 520L1000 524 1155 520 1300 522 1380 527 1430 535 1485 545', 'M1158 530L1190 570 1255 580 1290 605 1350 608',
  'M1340 610L1315 620 1285 613 1283 635 1267 643 1278 665 1275 700 1250 760 1240 790 1220 825 1120 790 1115 640 1080 524', 'M1368 938L1237 833 1275 795',
  'M638 890L625 975 617 1070 607 1140 597 1250 590 1362', 'M788 1172L830 1230 840 1260 850 1290 870 1300 880 1350 895 1375 900 1410',
  'M1383 1215L1370 1200 1310 1172 1275 1137 1235 1128 1165 1070 1177 1037 1158 990 1130 975',
  'M1275 1145L1258 1160 1240 1243 1205 1222 1160 1185 1125 1155 1110 1178 1060 1140 1018 1108V1065L1035 1053 1048 1060 1060 1115 1090 1110 1105 1040 1090 1035 1080 1010 1000 1040 925 1062 918 1100 890 1135 850 1168 800 1175 760 1155 735 1145 690 1150 610 1142 440 1195',
  'M1100 1040L1165 1065', 'M1065 955L1055 1010', 'M915 845L950 900 985 925 1130 975 1142 940 1125 910 1140 885',
  'M1142 940L1155 910 1195 870 1185 855 1165 880 1140 885 1115 865 1090 842H1065',
  'M198 1144L430 862 465 828 518 810 560 785 607 758V880L640 887', 'M518 810L517 845 503 855 507 915 445 905 430 862', 'M503 855L560 845 605 820',
  'M607 850L595 845 540 910 500 970 465 1000 438 1000 375 925', 'M507 915L540 950 580 985 655 992 690 985', 'M365 880L410 888', 'M580 985L560 1040 540 1050 545 1075',
  'M438 1000L445 1035 475 1060 515 1010 580 960 635 900', 'M475 1060L490 1080 650 1077 692 1095', 'M303 1015L330 1060 418 1080 445 1045', 'M418 1080L420 1120 380 1175', 'M655 992L650 1077',
  'M750 1005L733 1050 735 1145 738 1250V1470', 'M750 1005L765 1060 790 1110 788 1172', 'M705 1040L692 1095 680 1170 675 1225 700 1265 735 1285 770 1270 780 1250 782 1200 795 1180',
  'M780 1250V1335L765 1370 740 1380', 'M705 1040L735 1020 745 1005', 'M760 1010L690 920 640 888', 'M682 988L690 1020 705 1040',
  'M620 615L595 640 640 710 620 720 625 730 650 715', 'M607 758L610 740 625 730', 'M672 735H712L740 745 800 725 855 730 900 745 960 775 1040 770 1075 785 1120 757',
  'M748 545L670 535 625 540 630 600 628 625 640 655 655 710 672 735', 'M628 597L810 606 870 570 945 520', 'M635 658L690 665 730 680 750 695', 'M658 597V655', 'M710 600L735 680', 'M700 670L705 735',
  'M760 668L855 675 890 653 945 643 1000 605 1090 568', 'M813 500L808 605 855 675 847 835', 'M803 610V725L818 800 800 835H765L745 825', 'M812 577L870 515V497', 'M847 760L815 768',
  'M745 825L695 845 655 833 630 815 625 780H607', 'M672 735V775L745 825', 'M712 735L705 770 690 778 672 775 660 835 638 890', 'M695 845L712 870 780 880', 'M745 825L818 935',
  'M712 872L690 920 650 955 630 985', 'M712 872L735 950', 'M730 950L765 930 795 925', 'M730 950L715 975 690 990', 'M800 830L910 840 950 855 1000 875', 'M847 835L820 890',
  'M850 900L915 945 950 900', 'M920 945L925 1062', 'M875 925L870 1000 860 1025', 'M925 1020L960 960 1000 875 1040 775', 'M875 825L930 845 980 815 990 855 1050 858', 'M1075 785L1050 858 1032 940',
  'M930 770L925 800 935 845', 'M897 618L915 615 940 580 965 540', 'M915 650V630L990 575', 'M948 645L960 690 1040 765', 'M1158 530L1150 560 1160 600 1145 620 1070 645 1065 680 1045 695', 'M1050 720L1090 690 1115 680',
  'M1045 700L1075 675 1100 672V682', 'M1050 520V495L1085 475 1090 460',
  'M530 212L503 265 518 290 500 303H465L460 293H448L443 346 425 345 412 337 340 328 295 345 248 367 85 291', 'M475 303L480 363', 'M480 350L485 335 510 331 545 340 582 346 645 367',
  'M248 367L250 395 425 427 412 337', 'M250 395L257 440', 'M425 427L447 490 420 515 383 554', 'M420 515L500 570 530 625 560 628 605 605 620 615',
];
/* each spot: centre x, centre y, radius x, radius y */
const HEAT = [
  { c: '#d2eee7', b: 12, s: [[360, 2, 24, 28], [1275, 335, 24, 42], [1085, 1050, 34, 44], [715, 1130, 36, 80], [900, 450, 46, 60], [1060, 620, 100, 50], [960, 780, 150, 60], [590, 930, 80, 50], [590, 860, 60, 60], [1220, 430, 46, 50], [690, 390, 90, 130]] },
  { c: '#8fd1bb', b: 13, s: [[975, 340, 44, 50], [375, 1010, 36, 38], [660, 305, 46, 62], [1125, 580, 34, 44], [1220, 460, 44, 52], [745, 1265, 54, 64], [470, 870, 84, 46], [420, 930, 50, 44], [540, 840, 46, 42], [1120, 860, 70, 68], [970, 630, 86, 58], [850, 560, 64, 82], [660, 640, 60, 80], [880, 980, 58, 128], [1080, 700, 42, 58], [710, 1060, 50, 60], [900, 760, 84, 54], [695, 390, 78, 110], [685, 500, 62, 60]] },
  { c: '#4cb388', b: 15, s: [[668, 325, 42, 64], [710, 385, 56, 76], [685, 480, 54, 75], [690, 560, 40, 60], [655, 640, 52, 70], [680, 760, 58, 100], [770, 780, 78, 68], [840, 560, 50, 68], [870, 660, 66, 70], [980, 640, 60, 50], [1000, 720, 66, 46], [720, 920, 78, 90], [870, 880, 76, 60], [880, 980, 48, 106], [970, 880, 56, 38], [1110, 860, 60, 60], [745, 1265, 36, 42], [1220, 460, 25, 30], [480, 870, 56, 28], [670, 1010, 40, 60], [1040, 880, 48, 38], [900, 710, 86, 46]] },
  { c: '#2a9d56', b: 15, s: [[695, 430, 34, 66], [850, 580, 36, 70], [660, 640, 38, 55], [680, 740, 32, 60], [720, 920, 60, 65], [885, 950, 42, 80], [985, 650, 48, 36], [920, 690, 58, 28], [1120, 850, 44, 44], [700, 830, 30, 60], [880, 640, 40, 45]] },
  { c: '#007a33', b: 13, s: [[665, 640, 20, 34], [735, 910, 34, 42], [880, 930, 24, 42], [1125, 850, 24, 24], [850, 590, 15, 34], [985, 650, 24, 18], [700, 960, 24, 24]] },
];

/* ---------- parts ---------- */
const Tools = ({ items }) => items.map((t, i) => {
  if (t === '|') return <Grip key={i} />;
  const f = t.slice(-1);
  const mod = '*+-~_'.includes(f) ? f : '';
  const n = mod ? t.slice(0, -1) : t;
  return (
    <Tool key={i} aria-label={n} $drop={mod === '+' || mod === '-'} $on={mod === '*'}>
      <Icon n={n} />
      {mod === '+' && <Caret />}
      {mod === '-' && <Caret $c="#8f8f8f" />}
      {mod === '~' && <CornerCaret $s={4} $c="#8f8f8f" />}
      {mod === '_' && <CornerCaret $s={4} />}
    </Tool>
  );
});
const Restore = ({ s = 14 }) => <svg width={s} height={s} viewBox="0 0 14 14"><path d="M4 3.500V1h9v8h-3M1 5h9v8H1z" fill="none" stroke="#000" strokeWidth="2" /></svg>;
const Cross = ({ s = 12, w = 2.6 }) => <svg width={s} height={s} viewBox="0 0 14 14"><path d="M1 1l12 12M13 1L1 13" stroke="#000" strokeWidth={w} /></svg>;
const Tri = ({ r = 0 }) => <svg width="10" height="8" viewBox="0 0 10 8"><path transform={`rotate(${r} 5 4)`} d="M0 7h10L5 1z" /></svg>;
const DockHead = ({ name, m }) => (
  <DockTitle>
    <HGrip /><DockName $m={m}>{name}</DockName><HGrip />
    <span>&nbsp;</span>
    <DockButton aria-label="Flotar"><Restore /></DockButton>
    <DockButton aria-label="Cerrar"><Cross /></DockButton>
  </DockTitle>
);
const MadridMap = () => (
  <svg viewBox="773 693 2134 1231" preserveAspectRatio="xMidYMid meet" role="img" aria-label="Mapa de barrios">
    <defs>{HEAT.map((h, i) => <filter key={i} id={`heat${i}`} x="-20%" y="-20%" width="140%" height="140%"><feGaussianBlur stdDeviation={h.b} /></filter>)}</defs>
    <g transform="translate(1200 1130) scale(.58673 .47832)">
      {HEAT.map((h, i) => <g key={i} fill={h.c} filter={`url(#heat${i})`}>{h.s.map(([x, y, a, b], j) => <ellipse key={j} cx={x} cy={y} rx={a} ry={b} />)}</g>)}
    </g>
    <g fill="none" stroke="#222" strokeLinejoin="round">
      <g transform="translate(1080 680) scale(.54209 .44643)">
        {NORTH.map((d, i) => <path key={i} d={d} vectorEffect="non-scaling-stroke" strokeWidth="1.3" />)}
        {NORTH_BOLD.map((d, i) => <path key={i} d={d} vectorEffect="non-scaling-stroke" strokeWidth="1.7" />)}
      </g>
      <g transform="translate(1200 1130) scale(.58673 .47832)">
        {OUTER.map((d, i) => <path key={i} d={d} vectorEffect="non-scaling-stroke" strokeWidth="1.3" />)}
        {STREETS.map((d, i) => <path key={i} d={d} vectorEffect="non-scaling-stroke" strokeWidth="1.7" stroke="#111" />)}
      </g>
    </g>
  </svg>
);

export default function App() {
  return (
    <Page>
      <Global />
      <Heading>Agregamos un CSV (Valores separados por comas)</Heading>
      <Stage>
        <Pointer viewBox="0 0 92 772" aria-hidden="true">
          <path d="M17 4V767H69M2 21L17 4 32 21" fill="none" stroke="#263562" strokeWidth="4" />
        </Pointer>
        <Window>
          <TitleBar>
            <Icon n="qgis" s={20} /><span>QGIS 2.18.13</span><Spacer />
            <WinButtons>
              <WinButton aria-label="Minimizar"><svg width="14" height="2"><path d="M0 1h14" stroke="#000" strokeWidth="2" /></svg></WinButton>
              <WinButton aria-label="Restaurar"><Restore s={15} /></WinButton>
              <WinButton aria-label="Cerrar"><Cross s={16} w={1.6} /></WinButton>
            </WinButtons>
          </TitleBar>
          <MenuBar>{MENUS.map(m => <MenuLink key={m} href="#">{m}</MenuLink>)}</MenuBar>
          <ToolBar $h={57}><Tools items={FILE_TOOLS} /></ToolBar>
          <ToolBar $h={57} $line={2}><Tools items={EDIT_TOOLS} /></ToolBar>
          <ToolBar $h={55}><Tools items={['|', 'qms']} /></ToolBar>

          <Body>
            <SideBar>
              <SideGrip $m="0 0 -4px 2px" />
              {SIDE_TOOLS.map(t => {
                const drop = t.endsWith('+');
                const n = drop ? t.slice(0, -1) : t;
                return (
                  <SideItem key={n}>
                    <SideButton aria-label={n} $hover={n === 'comma'}><Icon n={n} /></SideButton>
                    {drop && <Caret />}
                    {n === 'comma' && <Tip role="tooltip">Añadir capa de texto delimitado</Tip>}
                  </SideItem>
                );
              })}
              <SideGrip $m="12px 0 0 2px" />
            </SideBar>

            <Dock $w={332} $line>
              <DockHead name="Panel del explorador" m={18} />
              <DockTools>
                {['addSel', 'refresh', 'funnel', 'collapse', 'info'].map(n => <DockTool key={n} aria-label={n}><Icon n={n} s={22} /></DockTool>)}
              </DockTools>
              <Box>
                <Tree>
                  {TREE.map(([ic, t, open]) => (
                    <TreeRow key={t}>
                      <Expander $none={!open} aria-label={`Expandir ${t}`}><svg width="9" height="9"><path d="M0 4.500h9M4.500 0v9" stroke="#555" /></svg></Expander>
                      <Stub /><Icon n={ic} s={23} /><TreeText>{t}</TreeText>
                    </TreeRow>
                  ))}
                </Tree>
                <VScroll>
                  <ScrollKey aria-label="Subir"><Tri /></ScrollKey>
                  <ScrollKey aria-label="Posición" $h={38} />
                  <Spacer />
                  <ScrollKey aria-label="Página anterior"><Tri /></ScrollKey>
                  <ScrollKey aria-label="Bajar"><Tri r={180} /></ScrollKey>
                </VScroll>
              </Box>
              <Splitter><HGrip $w={105} /></Splitter>
              <DockHead name="Panel de marcadores espaciales" m={20} />
              <DockTools>
                {['zoomBook', 'bookNew', 'trashRed', 'share'].map(n => <DockTool key={n} aria-label={n}><Icon n={n} s={23} />{n === 'share' && <CornerCaret $s={3} $r={3} />}</DockTool>)}
              </DockTools>
              <TableBox>
                <TableClip>
                  <Table>
                    <colgroup><col width="146" /><col width="145" /><col width="101" /></colgroup>
                    <thead><tr><th scope="col">Nombre</th><th scope="col">Proyecto</th><th scope="col">XMín</th></tr></thead>
                    <tbody>{MARKS.map(r => <tr key={r[0]}>{r.map((c, i) => <td key={i}>{c}</td>)}</tr>)}</tbody>
                  </Table>
                </TableClip>
                <HScroll>
                  <ScrollKey aria-label="Izquierda" $h={24}><Tri r={-90} /></ScrollKey>
                  <ScrollKey aria-label="Posición horizontal" $w={70} $h={24}><HGrip $w={26} /></ScrollKey>
                  <Spacer />
                  <ScrollKey aria-label="Página izquierda" $h={24}><Tri r={-90} /></ScrollKey>
                  <ScrollKey aria-label="Derecha" $h={24}><Tri r={90} /></ScrollKey>
                </HScroll>
              </TableBox>
              <Splitter><HGrip $w={105} /></Splitter>
              <DockHead name="Panel de capas" m={16} />
              <DockTools>
                <DockTool aria-label="Estilo"><Icon n="brush" s={23} /></DockTool>
                <DockTool aria-label="Grupo"><Icon n="group" s={23} /></DockTool>
                <DockTool aria-label="Visibilidad"><Icon n="eye" s={23} /><CornerCaret $s={3} $r={3} /></DockTool>
                <DockTool aria-label="Filtro"><Icon n="funnel" s={23} /></DockTool>
                <DockTool aria-label="Expresión" $w={62}><Icon n="eps" s={23} /><Caret /></DockTool>
                <DockTool aria-label="Expandir"><Icon n="expand" s={23} /></DockTool>
                <DockTool aria-label="Contraer"><Icon n="collapse" s={23} /></DockTool>
                <DockTool aria-label="Más"><Icon n="more" s={20} /></DockTool>
              </DockTools>
              <Layers>
                <Layer>
                  <Branch /><Check id="l1" type="checkbox" defaultChecked />
                  <Swatch><svg width="22" height="22" fill="none" stroke="#999"><circle cx="8" cy="10" r="2" /><circle cx="5" cy="18" r="2" /><circle cx="18" cy="5" r="2" /></svg></Swatch>
                  <LayerLabel htmlFor="l1">0_UrbanismoInfrastructu...</LayerLabel>
                </Layer>
                <Layer $on>
                  <Branch /><Check id="l2" type="checkbox" defaultChecked />
                  <Swatch $on /><LayerLabel htmlFor="l2" $on>BARRIOS copiar</LayerLabel>
                </Layer>
              </Layers>
            </Dock>
            <VSplitter $w={10}><span /></VSplitter>

            <MapCanvas><MadridMap /></MapCanvas>

            <VSplitter $w={9}><span /></VSplitter>
            <Dock $w={236}>
              <DockHead name="Search QMS" m={11} />
              <SearchField placeholder="Search string..." aria-label="Search string" />
              <FilterRow>
                <PushButton>Filter by extent</PushButton>
                <Combo><select aria-label="Tipo"><option>All</option></select><span><Caret /></span></Combo>
              </FilterRow>
              <ResultBox />
            </Dock>
          </Body>

          <Status>
            <StatusText>Eliminada una entrada de la leyenda.</StatusText>
            <Spacer />
            <StatusLabel htmlFor="coord">Coordenada</StatusLabel>
            <Field id="coord" $w={387} $align="center" defaultValue="416582,4470515" />
            <Slot $w={48}><Icon n="mouse" s={22} /></Slot>
            <StatusLabel htmlFor="scale">Escala</StatusLabel>
            <Combo $w={128}><select id="scale"><option>1:173.237</option></select><span><Caret /></span></Combo>
            <Slot $w={48}><Icon n="lock" s={24} /></Slot>
            <StatusLabel htmlFor="amp">Amplificador</StatusLabel>
            <Spin $r={13}><input id="amp" defaultValue="100%" /><div><button aria-label="Más"><Tri /></button><button aria-label="Menos"><Tri r={180} /></button></div></Spin>
            <StatusLabel htmlFor="rot" $r={13}>Rotación</StatusLabel>
            <Spin $r={9}><input id="rot" defaultValue="0,0" /><div><button aria-label="Girar más"><Tri /></button><button aria-label="Girar menos"><Tri r={180} /></button></div></Spin>
            <Check id="draw" type="checkbox" defaultChecked />
            <Slot $w={6} />
            <StatusLabel htmlFor="draw" $r={26}>Representar</StatusLabel>
            <Slot $w={34}><Icon n="crs" s={24} /></Slot>
            <StatusText $fs={15}>EPSG:3042 (al vuelo)</StatusText>
            <Slot $w={32} /><Icon n="bubble" s={25} />
          </Status>

          <TaskBar>
            <Start aria-label="Inicio"><Icon n="windows" s={24} /></Start>
            <Search>
              <svg width="32" height="32"><circle cx="16" cy="16" r="13.5" fill="none" stroke="#111" strokeWidth="3.5" /></svg>
              <input placeholder="Escribe aquí para buscar" />
              <Icon n="mic" s={26} />
            </Search>
            <TaskView aria-label="Vista de tareas"><Icon n="taskview" s={23} /></TaskView>
            <Tasks>
              <Task $run aria-label="Firefox"><Icon n="firefox" s={34} /></Task>
              <Task aria-label="WhatsApp"><Icon n="whatsapp" s={34} /></Task>
              <Task aria-label="After Effects"><Adobe t="Ae" c="#c792f5" bg="#1b0a33" /></Task>
              <Task aria-label="Photoshop"><Adobe t="Ps" c="#7cc0f5" bg="#08123a" /></Task>
              <Task $run aria-label="Explorador"><Icon n="explorer" s={32} /></Task>
              <Task $run aria-label="Acrobat"><Icon n="pdf" s={34} /></Task>
              <Task $run aria-label="Atom"><Icon n="atom" s={35} /></Task>
              <Task $run aria-label="GitHub"><Icon n="github" s={35} /></Task>
              <Task $run aria-label="Illustrator"><Adobe t="Ai" c="#f7a11a" bg="#2a1606" /></Task>
              <Task $run aria-label="Monitor"><Icon n="monitor" s={34} /></Task>
              <Task $run $on aria-label="QGIS"><Icon n="qgis" s={32} /></Task>
            </Tasks>
            <Spacer />
            <Tray>
              <TrayIcon $w={70} aria-label="Contactos"><Icon n="person" s={24} /></TrayIcon>
              <TrayIcon aria-label="Mostrar iconos"><Icon n="up" s={23} /></TrayIcon>
              <TrayIcon aria-label="Dropbox"><Icon n="dropbox" s={22} /></TrayIcon>
              <TrayIcon aria-label="Batería"><Icon n="battery" s={24} /></TrayIcon>
              <TrayIcon aria-label="Volumen"><Icon n="mute" s={22} /></TrayIcon>
              <TrayIcon $w={40} aria-label="Wi-Fi"><Icon n="wifi" s={24} /></TrayIcon>
              <TrayText $w={44}>ESP<br />ES</TrayText>
              <TrayText $w={110}>13:24<br />03/07/2018</TrayText>
              <TrayIcon $w={54} aria-label="Notificaciones">
                <svg width="38" height="38" viewBox="0 0 38 38"><path d="M3 3h25v20H16l-6 6v-6H3z" fill="#fff" /><path d="M7 8h17M7 13h17M7 18h10" stroke="#352406" strokeWidth="2" /><circle cx="26" cy="25" r="11" fill="#3a3a3a" stroke="#999" /><text x="22" y="31" fontSize="16" fontFamily="Open Sans" fill="#fff">1</text></svg>
              </TrayIcon>
            </Tray>
            <Peek />
          </TaskBar>
        </Window>
      </Stage>
    </Page>
  );
}
